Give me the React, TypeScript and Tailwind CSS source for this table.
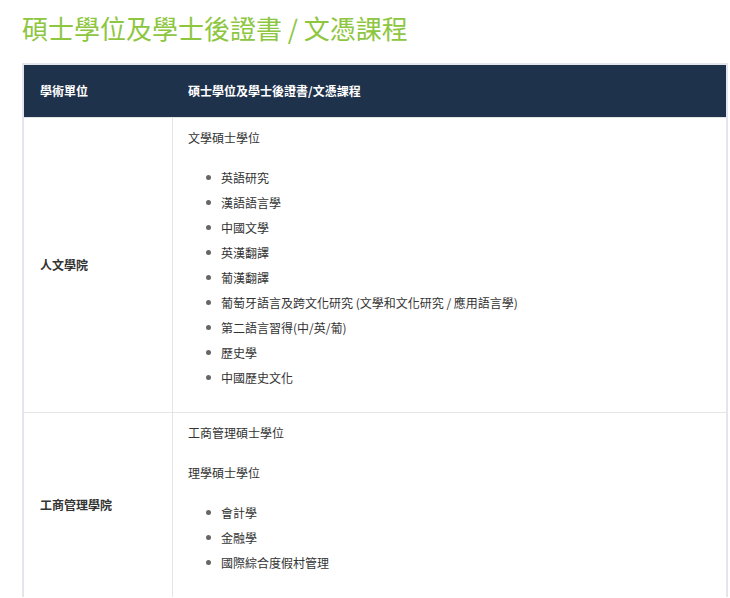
const font = { fontFamily: '"Noto Sans CJK TC", "Noto Sans", sans-serif' }

const rows = [
  {
    unit: '人文學院',
    groups: [
      {
        title: '文學碩士學位',
        items: [
          '英語研究',
          '漢語語言學',
          '中國文學',
          '英漢翻譯',
          '葡漢翻譯',
          '葡萄牙語言及跨文化研究 (文學和文化研究 / 應用語言學)',
          '第二語言習得(中/英/葡)',
          '歷史學',
          '中國歷史文化',
        ],
      },
    ],
  },
  {
    unit: '工商管理學院',
    groups: [
      { title: '工商管理碩士學位', items: [] },
      { title: '理學碩士學位', items: ['會計學', '金融學', '國際綜合度假村管理'] },
    ],
  },
]

export default function App() {
  return (
    <div className="min-h-[598px] bg-white" style={font}>
      <h1 className="pl-[22px] pt-[8px] text-[26px] leading-[40px] text-[#8dc63f]">
        碩士學位及學士後證書 / 文憑課程
      </h1>
      <div className="ml-[22px] mt-[15px] w-[706px] border-2 border-[#e3e6ea] border-b-0">
        <div className="flex h-[52px] items-center bg-[#1f324c] text-[12px] font-bold text-white">
          <div className="w-[148px] pl-[16px]">學術單位</div>
          <div className="pl-[16px]">碩士學位及學士後證書/文憑課程</div>
        </div>
        {rows.map((row, i) => (
          <div key={i} className="flex border-t border-[#e5e5e5]">
            <div className="flex w-[148px] items-center pl-[16px] text-[12px] font-bold text-[#333]">
              {row.unit}
            </div>
            <div className="flex-1 border-l border-[#e5e5e5] pl-[15px] pr-[16px] pt-[7px] pb-[9px] text-[12px] text-[#333]">
              {row.groups.map((g, j) => (
                <div key={j}>
                  <p className="mb-[15px] leading-[25px]">{g.title}</p>
                  {g.items.length > 0 && (
                    <ul className="mb-[13px]">
                      {g.items.map((it, k) => (
                        <li key={k} className="flex items-center leading-[25px]">
                          <span className="ml-[18px] mr-[10px] h-[5px] w-[5px] rounded-full bg-[#666]" />
                          {it}
                        </li>
                      ))}
                    </ul>
                  )}
                </div>
              ))}
            </div>
          </div>
        ))}
      </div>
    </div>
  )
}
